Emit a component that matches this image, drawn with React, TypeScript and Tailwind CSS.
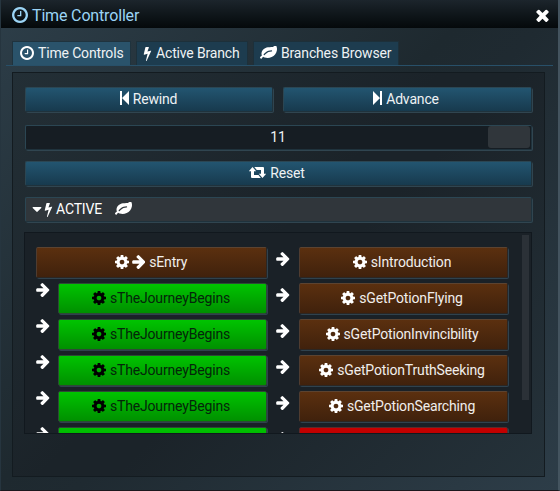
import React from "react";

const PATHS = {
  clock:
    "M1024 544v448q0 14-9 23t-23 9h-320q-14 0-23-9t-9-23v-64q0-14 9-23t23-9h224v-352q0-14 9-23t23-9h64q14 0 23 9t9 23zm416 352q0-148-73-273t-198-198-273-73-273 73-198 198-73 273 73 273 198 198 273 73 273-73 198-198 73-273zm224 0q0 209-103 385.500t-279.500 279.500-385.500 103-385.500-103-279.500-279.500-103-385.500 103-385.500 279.500-279.500 385.500-103 385.500 103 279.500 279.500 103 385.500z",
  bolt:
    "M1333 566q18 20 7 44l-540 1157q-13 25-42 25-4 0-14-2-17-5-25.500-19t-4.500-30l197-808-406 101q-4 1-12 1-18 0-31-11-18-15-13-39l201-825q4-14 16-23t28-9h328q19 0 32 12.500t13 29.500q0 8-5 18l-171 463 396-98q8-2 12-2 19 0 34 15z",
  arrow:
    "M1600 960q0 54-37 91l-651 651q-39 37-91 37-51 0-90-37l-75-75q-38-38-38-91t38-91l293-293h-704q-52 0-84.500-37.500t-32.500-90.500v-128q0-53 32.500-90.500t84.500-37.500h704l-293-294q-38-36-38-90t38-90l75-75q38-38 90-38 53 0 91 38l651 651q37 35 37 90z",
  cog:
    "M1152 896q0-106-75-181t-181-75-181 75-75 181 75 181 181 75 181-75 75-181zm512-109v222q0 12-8 23t-20 13l-185 28q-19 54-39 91 35 50 107 138 10 12 10 25t-9 23q-27 37-99 108t-94 71q-12 0-26-9l-138-108q-44 23-91 38-16 136-29 186-7 28-36 28h-222q-14 0-24.500-8.500t-11.500-21.500l-28-184q-49-16-90-37l-141 107q-10 9-25 9-14 0-25-11-126-114-165-168-7-10-7-23 0-12 8-23 15-21 51-66.500t54-70.500q-27-50-41-99l-183-27q-13-2-21-12.500t-8-23.500v-222q0-12 8-23t19-13l186-28q14-46 39-92-40-57-107-138-10-12-10-24 0-10 9-23 26-36 98.500-107.500t94.500-71.500q13 0 26 10l138 107q44-23 91-38 16-136 29-186 7-28 36-28h222q14 0 24.500 8.500t11.500 21.500l28 184q49 16 90 37l142-107q9-9 24-9 13 0 25 10 129 119 165 170 7 8 7 22 0 12-8 23-15 21-51 66.500t-54 70.500q26 50 41 98l183 28q13 2 21 12.500t8 23.500z",
  leaf:
    "M1280 704q0-26-19-45t-45-19q-172 0-318 49.500t-259.500 134-235.500 219.500q-19 21-19 45 0 26 19 45t45 19q24 0 45-19 27-24 74-71t67-66q137-124 268.500-176t313.500-52q26 0 45-19t19-45zm512-198q0 95-20 193-46 224-184.500 383t-357.500 268q-214 108-438 108-148 0-286-47-15-5-88-42t-96-37q-16 0-39.500 32t-45 70-52.500 70-60 32q-43 0-63.500-17.500t-45.500-59.500q-2-4-6-11t-5.500-10-3-9.500-1.500-13.500q0-35 31-73.500t68-65.500 68-56 31-48q0-4-14-38t-16-44q-9-51-9-104 0-115 43.500-220t119-184.500 170.500-139 204-95.500q55-18 145-25.500t179.500-9 178.500-6 163.500-24 113.500-56.500l29.500-29.500 29.500-28 27-20 36.500-16 43.500-4.500q39 0 70.500 46t47.500 112 24 124 8 96z",
  close:
    "M1490 1322q0 40-28 68l-136 136q-28 28-68 28t-68-28l-294-294-294 294q-28 28-68 28t-68-28l-136-136q-28-28-28-68t28-68l294-294-294-294q-28-28-28-68t28-68l136-136q28-28 68-28t68 28l294 294 294-294q28-28 68-28t68 28l136 136q28 28 28 68t-28 68l-294 294 294 294q28 28 28 68z",
  caret:
    "M1408 704q0 26-19 45l-448 448q-19 19-45 19t-45-19l-448-448q-19-19-19-45t19-45 45-19h896q26 0 45 19t19 45z",
};

type IconProps = { name: keyof typeof PATHS; box: string; className: string };

function Icon({ name, box, className }: IconProps) {
  return (
    <svg viewBox={box} className={`shrink-0 ${className}`} fill="currentColor" aria-hidden="true">
      <path d={PATHS[name]} />
    </svg>
  );
}

const Clock = ({ className }: { className: string }) => <Icon name="clock" box="128 128 1536 1536" className={className} />;
const Bolt = () => <Icon name="bolt" box="448 0 900 1792" className="h-[15px] w-[9px]" />;
const Leaf = () => <Icon name="leaf" box="0 192 1792 1472" className="h-[14px] w-[17px]" />;
const Cog = () => <Icon name="cog" box="128 128 1536 1536" className="h-[14px] w-[14px]" />;
const Arrow = () => <Icon name="arrow" box="128 170 1472 1570" className="h-[14px] w-[13.500px]" />;

const FRAME =
  "rounded-[2px] border border-t-[#2b4653] border-r-[#1f323c] border-b-[#1f323c] border-l-[#2b4653] shadow-[1px_1px_0_#304550]";
const BLUE = "bg-linear-to-b from-[#235570] to-[#173a4e]";

function Bar({ children, className }: { children: React.ReactNode; className: string }) {
  return (
    <div className={`flex h-[25px] items-center pb-px ${FRAME} ${className}`}>{children}</div>
  );
}

function Node({ label, tone, entry }: { label?: string; tone: "brown" | "green" | "red"; entry?: boolean }) {
  const tones = {
    brown: "border-t-[#5c4330] border-r-[#2c2622] border-b-[#2c2622] border-l-[#4f3c30] bg-linear-to-b from-[#5b300f] to-[#40210c] text-[#f1eeec]",
    green: "border-[#2d4a35] bg-linear-to-b from-[#00c400] to-[#009000] text-[#04260a]",
    red: "border-[#5c2a2a] bg-linear-to-b from-[#c80000] to-[#930000] text-white",
  };
  const iconTone = tone === "green" ? "text-black" : "text-white";
  return (
    <div className={`mr-px flex h-[31px] flex-1 items-center justify-center rounded-[2px] border pb-px shadow-[1px_1px_0_#2f424e] ${entry ? "pr-px" : "pr-[3px]"} ${tones[tone]}`}>
      {label && (
        <>
          <span className={`mr-1 flex gap-[3px] pb-px ${iconTone}`}>
            <Cog />
            {entry && <Arrow />}
          </span>
          <span>{label}</span>
        </>
      )}
    </div>
  );
}

const ROWS: { left?: string; right?: string; end?: boolean }[] = [
  { left: "sTheJourneyBegins", right: "sGetPotionFlying" },
  { left: "sTheJourneyBegins", right: "sGetPotionInvincibility" },
  { left: "sTheJourneyBegins", right: "sGetPotionTruthSeeking" },
  { left: "sTheJourneyBegins", right: "sGetPotionSearching" },
  { end: true },
];

export default function App() {
  return (
    <div className="flex h-[491px] w-[560px] flex-col overflow-hidden border-r-2 border-b border-l border-r-[#44545f] border-b-[#1b171d] border-l-[#26353f] bg-[linear-gradient(135deg,#2d3e49_0%,#1e292f_46%,#1f2a31_54%,#2d3d48_100%)] font-[Roboto,sans-serif] text-[14px] leading-[18px] tracking-[-0.16px] text-[#eef2f4]">
      <header className="flex h-7 shrink-0 items-center justify-between bg-linear-to-b from-[#1c252c] to-[#05090b] pr-[9px] pl-[11px] text-[#9bd4f5]">
        <div className="flex items-center gap-1 pt-px">
          <Clock className="h-4 w-4" />
          <h1 className="pt-[2px] text-[16px] leading-5">Time Controller</h1>
        </div>
        <Icon name="close" box="302 302 1188 1252" className="mt-[2px] h-[13px] w-[13px] text-white" />
      </header>

      <nav className="mx-[5px] mt-[13px] flex h-[25px] shrink-0 gap-[5px] border-b border-[#285069] pl-[6px]">
        <div className="flex w-[119px] items-center gap-1 border border-b-0 border-[#1f333e] bg-[#2a536b] pb-px pl-[7px]">
          <Clock className="mb-px h-[14px] w-[14px] text-white" />
          <span>Time Controls</span>
        </div>
        <div className="flex w-[112px] items-center gap-1 border border-b-0 border-[#1d303a] bg-[#1d3c4f] pb-px pl-[6px] text-white">
          <Bolt />
          <span className="text-[#eef2f4]">Active Branch</span>
        </div>
        <div className="flex w-[146px] items-center gap-1 border border-b-0 border-[#1d303a] bg-[#1d3c4f] pb-px pl-[6px] text-white">
          <span className="flex"><Leaf /></span>
          <span className="text-[#eef2f4]">Branches Browser</span>
        </div>
      </nav>

      <main className="mt-[6px] mr-[13px] ml-[11px] flex h-[405px] flex-col border border-[#131b20] bg-[linear-gradient(135deg,#232f36,#1b2329_46%,#1b2329_54%,#25323a)] px-3 pt-[14px]">
        <div className="flex gap-[10px]">
          <Bar className={`w-[248px] justify-center gap-1 pr-px ${BLUE}`}>
            <svg viewBox="0 0 9 14" className="mb-[2px] h-[14px] w-[9px]" fill="white"><path d="M0 0h2v14H0zM2 7 9 0v14z" /></svg>
            <span>Rewind</span>
          </Bar>
          <Bar className={`w-[249px] justify-center gap-1 pr-[3px] ${BLUE}`}>
            <svg viewBox="0 0 9 14" className="mb-[2px] h-[14px] w-[9px]" fill="white"><path d="M7 0h2v14H7zM7 7 0 0v14z" /></svg>
            <span>Advance</span>
          </Bar>
        </div>
        <Bar className="relative mt-[13px] w-[507px] justify-center bg-[#161d23] pr-px">
          <span>11</span>
          <div className="absolute top-0 right-px h-[22px] w-[42px] rounded-[3px] bg-[#30363b]" />
        </Bar>
        <Bar className={`mt-[11px] w-[507px] justify-center gap-1 pr-[3px] ${BLUE}`}>
          <svg viewBox="0 0 17 11" className="mb-px h-[11px] w-[17px]" fill="white">
            <path d="M3.500 0 7.200 4.300H5V8H9.500L11.800 11H3Q2 11 2 10V4.300H-.2zM5.300 0H14Q15 0 15 1V6.700H17.200L13.500 11 9.800 6.700H12V3H7.800z" />
          </svg>
          <span>Reset</span>
        </Bar>
        <Bar className="mt-[11px] w-[507px] bg-[#30363b] pl-[6px] text-white">
          <Icon name="caret" box="384 640 1024 576" className="h-[5px] w-[10px]" />
          <span className="ml-[2px]"><Bolt /></span>
          <span className="ml-[3px]">ACTIVE</span>
          <span className="mb-px ml-[13px] flex"><Leaf /></span>
        </Bar>

        <section className="mt-[10px] -ml-px flex h-[202px] w-[508px] shrink-0 overflow-hidden border border-[#11181e] bg-[#1a2127]">
          <div className="flex w-[484px] shrink-0 flex-col gap-[5px] pt-[14px] pl-[11px]">
            <div className="flex h-[31px] shrink-0">
              <div className="flex w-[232px]"><Node label="sEntry" tone="brown" entry /></div>
              <div className="w-[31px] pt-[5px] pl-2 text-white"><Arrow /></div>
              <div className="flex w-[210px]"><Node label="sIntroduction" tone="brown" /></div>
            </div>
            {ROWS.map((row, i) => (
              <div key={i} className="flex h-[31px] shrink-0">
                <div className="w-[22px] text-white"><Arrow /></div>
                <div className="flex w-[210px]"><Node label={row.left} tone="green" /></div>
                <div className="w-[31px] pt-[5px] pl-2 text-white"><Arrow /></div>
                <div className="flex w-[210px]"><Node label={row.right} tone={row.end ? "red" : "brown"} /></div>
              </div>
            ))}
          </div>
          <div className="mt-[2px] ml-[13px] h-[165px] w-[7px] bg-[#2b3137]" />
        </section>
      </main>
    </div>
  );
}
